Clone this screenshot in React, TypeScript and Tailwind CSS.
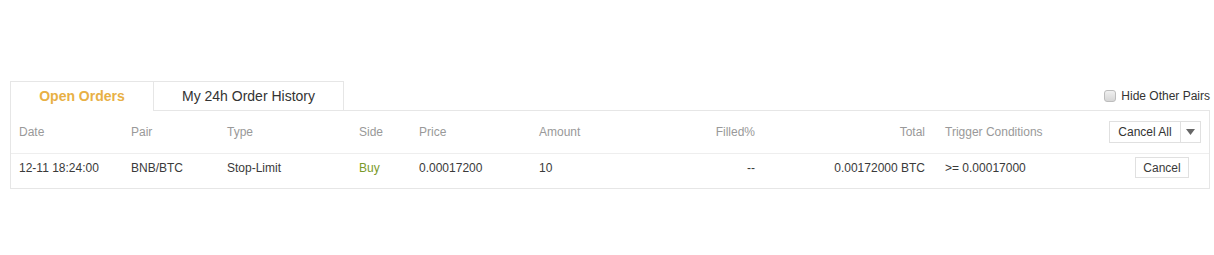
import React from "react";

const cols =
  "grid grid-cols-[112px_96px_132px_60px_120px_120px_96px_170px_1fr_92px] items-center px-[8px]";

export default function App() {
  return (
    <div className="min-h-[255px] bg-white pt-[81px] pl-[10px] font-['Liberation_Sans',Arial,sans-serif]">
      <div className="w-[1200px]">
        {/* tabs */}
        <div className="flex h-[30px]">
          <div className="w-[143px] h-[30px] border-l border-t border-[#e6e6e6] bg-white flex items-center justify-center text-[14px] font-bold text-[#e8b045]">
            Open Orders
          </div>
          <div className="w-[191px] h-[30px] border border-[#e6e6e6] flex items-center justify-center text-[14px] text-[#333]">
            My 24h Order History
          </div>
          <div className="flex-1 h-[30px] border-b border-[#e6e6e6] flex items-center justify-end">
            <label className="flex items-center gap-[5px] text-[12px] text-[#333] mt-[1px]">
              <span className="w-[12px] h-[12px] rounded-[3px] border border-[#bdbdbd] bg-gradient-to-b from-[#f0f0f0] to-[#d6d6d6]" />
              Hide Other Pairs
            </label>
          </div>
        </div>

        {/* table */}
        <div className="border border-t-0 border-[#e6e6e6] text-[12px]">
          <div className={`${cols} h-[43px] border-b border-[#eeeeee] text-[#999]`}>
            <div>Date</div>
            <div>Pair</div>
            <div>Type</div>
            <div>Side</div>
            <div>Price</div>
            <div>Amount</div>
            <div className="text-right">Filled%</div>
            <div className="text-right">Total</div>
            <div className="pl-[20px]">Trigger Conditions</div>
            <div className="flex justify-end">
              <div className="flex h-[22px] border border-[#e0e0e0] bg-white text-[#333]">
                <button className="w-[71px] border-r border-[#e0e0e0] flex items-center justify-center">
                  Cancel All
                </button>
                <button className="w-[19px] flex items-center justify-center">
                  <svg width="9" height="6" viewBox="0 0 9 6">
                    <path d="M0 0h9L4.5 6z" fill="#666" />
                  </svg>
                </button>
              </div>
            </div>
          </div>
          <div className={`${cols} h-[34px] pb-[7px] text-[#3a3a3a]`}>
            <div>12-11 18:24:00</div>
            <div>BNB/BTC</div>
            <div>Stop-Limit</div>
            <div className="text-[#7a9a2a]">Buy</div>
            <div>0.00017200</div>
            <div>10</div>
            <div className="text-right">--</div>
            <div className="text-right">0.00172000 BTC</div>
            <div className="pl-[20px]">&gt;= 0.00017000</div>
            <div className="flex justify-end pr-[12px]">
              <button className="h-[21px] w-[54px] border border-[#e0e0e0] bg-white flex items-center justify-center">
                Cancel
              </button>
            </div>
          </div>
        </div>
      </div>
    </div>
  );
}
